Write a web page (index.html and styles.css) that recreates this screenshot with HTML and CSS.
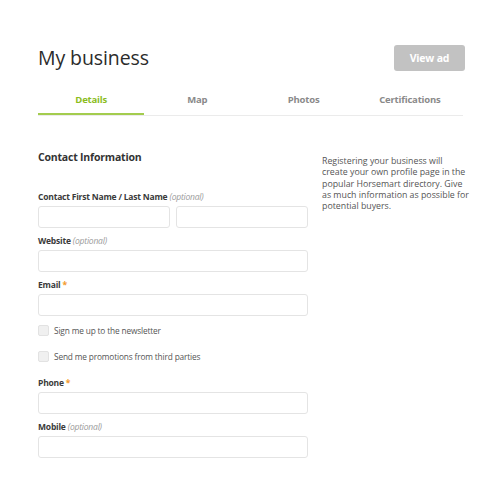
FILE: index.html
```html
<!DOCTYPE html>
<html>
<head>
<meta charset="utf-8">
<link rel="stylesheet" href="styles.css">
</head>
<body>
<div class="page">
  <div class="header">
    <h1 class="title">My business</h1>
    <button class="view-btn">View ad</button>
  </div>
  <div class="tabs">
    <div class="tab active">Details</div>
    <div class="tab">Map</div>
    <div class="tab">Photos</div>
    <div class="tab">Certifications</div>
  </div>
  <div class="content">
    <div class="form">
      <h2 class="section">Contact Information</h2>
      <div class="field first">
        <div class="label">Contact First Name / Last Name <span class="opt">(optional)</span></div>
        <div class="pair">
          <div class="input"></div>
          <div class="input"></div>
        </div>
      </div>
      <div class="field">
        <div class="label">Website <span class="opt">(optional)</span></div>
        <div class="input"></div>
      </div>
      <div class="field">
        <div class="label">Email <span class="req">*</span></div>
        <div class="input"></div>
      </div>
      <div class="check"><span class="box"></span>Sign me up to the newsletter</div>
      <div class="check"><span class="box"></span>Send me promotions from third parties</div>
      <div class="field phone">
        <div class="label">Phone <span class="req">*</span></div>
        <div class="input"></div>
      </div>
      <div class="field">
        <div class="label">Mobile <span class="opt">(optional)</span></div>
        <div class="input"></div>
      </div>
    </div>
    <p class="aside">Registering your business will create your own profile page in the popular Horsemart directory. Give as much information as possible for potential buyers.</p>
  </div>
</div>
</body>
</html>
```
FILE: styles.css
```css
* { box-sizing: border-box; }
body {
  margin: 0;
  background: #fff;
  font-family: "Open Sans", "Noto Sans", sans-serif;
  color: #333;
}
.page {
  padding: 43px 37px 0 38px;
  width: 500px;
}
.header {
  display: flex;
  justify-content: space-between;
  align-items: center;
}
.title {
  margin: 0;
  font-size: 19.5px;
  font-weight: 400;
  color: #2b2b2b;
  line-height: 30px;
  letter-spacing: -0.1px;
}
.view-btn {
  width: 71px;
  height: 26px;
  margin-right: -2px;
  border: none;
  border-radius: 3px;
  background: #c2c2c2;
  color: #fff;
  font-family: inherit;
  font-weight: 700;
  font-size: 10.5px;
  letter-spacing: -0.2px;
}
.tabs {
  display: grid;
  grid-template-columns: repeat(4, 1fr);
  margin-top: 15px;
  border-bottom: 1px solid #ebebeb;
}
.tab {
  text-align: center;
  font-size: 9.5px;
  font-weight: 700;
  color: #8a8a8a;
  height: 27px;
  line-height: 24px;
  letter-spacing: -0.2px;
}
.tab.active {
  color: #8bbd1e;
  border-bottom: 2px solid #a3cc4e;
  margin-bottom: -1px;
}
.content {
  display: grid;
  grid-template-columns: 270px 148.5px;
  column-gap: 14px;
  margin-top: 34px;
}
.section {
  margin: 0;
  font-size: 10.5px;
  font-weight: 700;
  color: #333;
  line-height: 15px;
  letter-spacing: -0.2px;
}
.field { margin-top: 7px; }
.field.first { margin-top: 26px; }
.field.phone { margin-top: 15px; }
.label {
  font-size: 8.5px;
  font-weight: 700;
  color: #3a3a3a;
  line-height: 12px;
  margin-bottom: 3px;
  letter-spacing: -0.2px;
}
.opt {
  font-weight: 400;
  font-style: italic;
  color: #9a9a9a;
}
.req { color: #f39a2b; }
.pair {
  display: grid;
  grid-template-columns: 1fr 1fr;
  gap: 6px;
}
.input {
  height: 22px;
  border: 1px solid #e4e4e4;
  border-radius: 3px;
  background: #fff;
}
.check {
  display: flex;
  align-items: center;
  font-size: 8.3px;
  color: #555;
  height: 12px;
  margin-top: 8px;
  letter-spacing: -0.15px;
}
.check + .check { margin-top: 14px; }
.box {
  width: 11px;
  height: 11px;
  border: 1px solid #e2e2e2;
  background: #f0f0f0;
  border-radius: 2px;
  margin-right: 5px;
  flex: none;
}
.aside {
  margin: 6px 0 0 0;
  font-size: 8.8px;
  line-height: 11.3px;
  color: #555;
  letter-spacing: 0;
}
```
